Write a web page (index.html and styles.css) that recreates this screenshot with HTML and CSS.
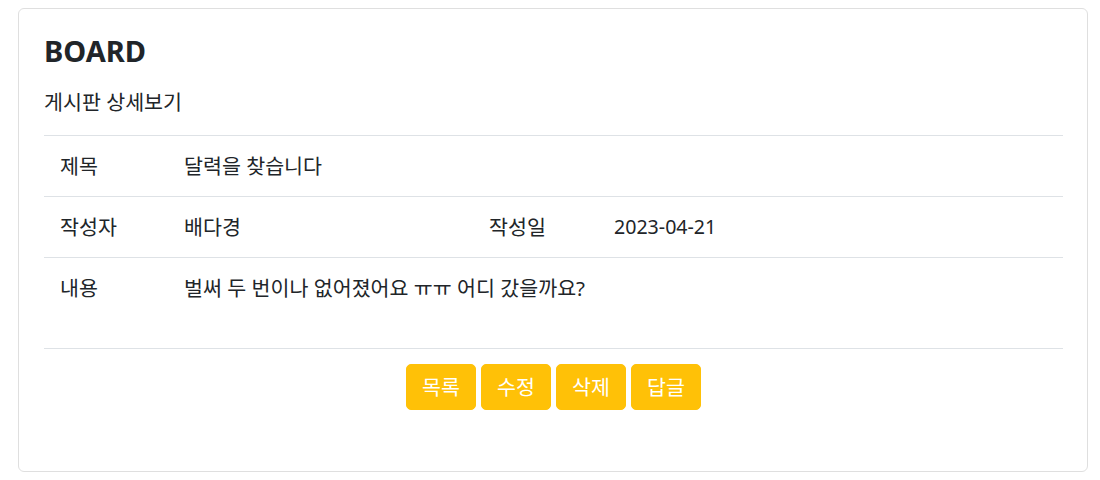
FILE: index.html
```html
<!DOCTYPE html>
<html lang="ko">
<head>
<meta charset="utf-8">
<title>BOARD</title>
<link rel="stylesheet" href="styles.css">
</head>
<body>
<div class="page">
  <div class="card">
    <h2 class="title">BOARD</h2>
    <p class="subtitle">게시판 상세보기</p>
    <div class="table">
      <div class="row">
        <div class="cell label">제목</div>
        <div class="cell value wide">달력을 찾습니다</div>
      </div>
      <div class="row">
        <div class="cell label">작성자</div>
        <div class="cell value">배다경</div>
        <div class="cell label">작성일</div>
        <div class="cell value date">2023-04-21</div>
      </div>
      <div class="row content">
        <div class="cell label">내용</div>
        <div class="cell value wide">벌써 두 번이나 없어졌어요 ㅠㅠ 어디 갔을까요?</div>
      </div>
    </div>
    <div class="actions">
      <button class="btn">목록</button>
      <button class="btn">수정</button>
      <button class="btn">삭제</button>
      <button class="btn">답글</button>
    </div>
  </div>
</div>
</body>
</html>
```

FILE: styles.css
```css
* { box-sizing: border-box; }
html, body { margin: 0; padding: 0; background: #fff; }
body {
  font-family: "Noto Sans", "Noto Sans CJK KR", sans-serif;
  font-size: 20.6px;
  color: #212529;
}
.page {
  padding: 8px 12px 9px 18px;
}
.card {
  border: 1px solid #dfdfdf;
  border-radius: 6px;
  padding: 25px 24px 25px 25px;
}
.title {
  margin: 0;
  font-size: 29px;
  font-weight: 700;
  line-height: 34px;
  height: 34px;
}
.subtitle {
  margin: 20px 0 0;
  line-height: 28px;
  height: 29px;
}
.table {
  margin-top: 18px;
  border-top: 1px solid #dee2e6;
}
.row {
  display: grid;
  grid-template-columns: 124px 305px 125px 1fr;
  border-bottom: 1px solid #dee2e6;
  height: 61px;
}
.row.content { height: 91px; }
.cell {
  padding: 16px 16px;
  line-height: 28px;
  white-space: nowrap;
}
.cell.wide { grid-column: 2 / 5; }
.cell.date { font-size: 19.6px; }
.actions {
  display: flex;
  justify-content: center;
  gap: 5px;
  margin-top: 15px;
  margin-bottom: 36px;
}
.btn {
  font-family: inherit;
  font-size: 20.6px;
  line-height: 28px;
  height: 46px;
  color: #fff;
  background: #ffc107;
  border: 1px solid #ffc107;
  border-radius: 5px;
  padding: 0;
  width: 70px;
  cursor: pointer;
}
```
